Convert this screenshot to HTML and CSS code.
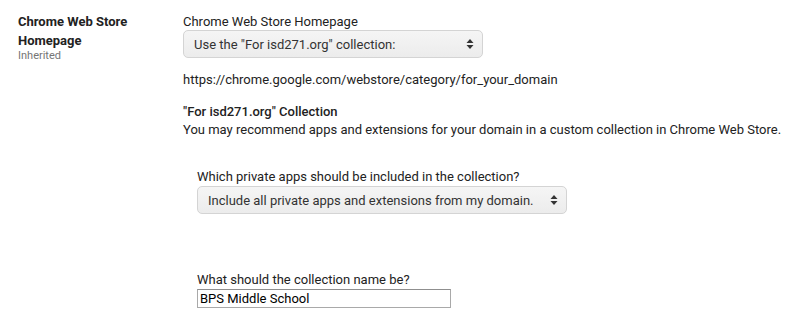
FILE: index.html
```html
<!DOCTYPE html>
<html lang="en">
<head>
    <meta charset="UTF-8">
    <title>Chrome Web Store Homepage</title>
    <link rel="stylesheet" href="styles.css">
</head>
<body>
    <div class="setting">
        <div class="setting-label">
            <div class="label-title">Chrome Web Store Homepage</div>
            <div class="label-sub">Inherited</div>
        </div>

        <div class="setting-body">
            <div class="field-title">Chrome Web Store Homepage</div>
            <div class="select-wrap wide">
                <select class="select">
                    <option>Use the "For isd271.org" collection:</option>
                </select>
                <svg class="arrows" width="8" height="12" viewBox="0 0 8 12">
                    <path d="M4 1 L7.5 5 L0.5 5 Z M4 11 L7.5 7 L0.5 7 Z" fill="#333"/>
                </svg>
            </div>

            <div class="url">https://chrome.google.com/webstore/category/for_your_domain</div>

            <div class="collection-title">"For isd271.org" Collection</div>
            <div class="collection-desc">You may recommend apps and extensions for your domain in a custom collection in Chrome Web Store.</div>

            <div class="sub-field">
                <div class="question">Which private apps should be included in the collection?</div>
                <div class="select-wrap narrow">
                    <select class="select">
                        <option>Include all private apps and extensions from my domain.</option>
                    </select>
                    <svg class="arrows" width="8" height="12" viewBox="0 0 8 12">
                        <path d="M4 1 L7.5 5 L0.5 5 Z M4 11 L7.5 7 L0.5 7 Z" fill="#333"/>
                    </svg>
                </div>
            </div>

            <div class="sub-field name-field">
                <div class="question">What should the collection name be?</div>
                <input class="text-input" type="text" value="BPS Middle School">
            </div>
        </div>
    </div>
</body>
</html>
```

FILE: styles.css
```css
body {
    margin: 0;
    font-family: Roboto, "Liberation Sans", Arial, sans-serif;
    font-size: 13px;
    color: #222;
    background: #fff;
}

.setting {
    display: flex;
    padding: 12px 0 0 18px;
}

.setting-label {
    width: 165px;
    flex-shrink: 0;
}

.label-title {
    font-weight: bold;
    line-height: 19px;
    width: 130px;
    color: #222;
}

.label-sub {
    font-size: 11px;
    color: #757575;
    line-height: 14px;
    margin-top: -1px;
}

.setting-body {
    flex: 1;
}

.field-title {
    line-height: 17px;
    padding-top: 1px;
}

.select-wrap {
    position: relative;
}

.select-wrap.wide {
    width: 300px;
}

.select-wrap.narrow {
    width: 370px;
}

.select {
    -webkit-appearance: none;
    appearance: none;
    width: 100%;
    height: 28px;
    border: 1px solid #d4d4d4;
    border-radius: 5px;
    background: linear-gradient(#f5f5f5, #ececec);
    font-family: inherit;
    font-size: 13px;
    color: #333;
    padding: 0 24px 0 10px;
    margin: 0;
    display: block;
}

.arrows {
    position: absolute;
    right: 9px;
    top: 8px;
}

.url {
    line-height: 18px;
    margin-top: 13px;
}

.collection-title {
    font-weight: 500;
    line-height: 18px;
    margin-top: 14px;
}

.collection-desc {
    line-height: 18px;
}

.sub-field {
    padding-left: 14px;
    margin-top: 29px;
}

.question {
    line-height: 18px;
}

.name-field {
    margin-top: 57px;
}

.text-input {
    display: block;
    width: 254px;
    height: 19px;
    box-sizing: border-box;
    border: 1px solid #a9a9a9;
    border-top-color: #8f8f8f;
    padding: 0 2px;
    margin: 0;
    font-family: inherit;
    font-size: 13px;
    color: #000;
}
```
